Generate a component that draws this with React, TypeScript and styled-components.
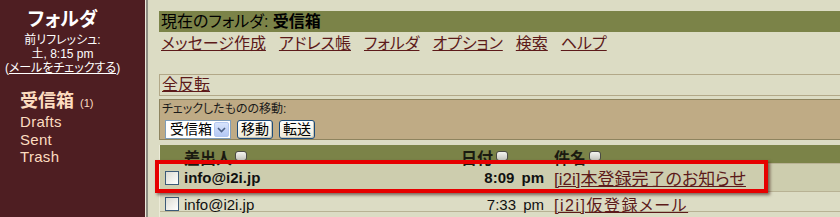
import React from "react";
import styled, { createGlobalStyle } from "styled-components";

const GlobalStyle = createGlobalStyle`
  html, body {
    margin: 0;
    padding: 0;
    overflow: hidden;
  }
  body {
    font-family: "Liberation Sans", "Noto Sans CJK JP", sans-serif;
    font-feature-settings: "palt";
  }
`;

const Page = styled.div`
  display: flex;
  width: 840px;
  height: 217px;
  overflow: hidden;
  position: relative;
  background: #dcdcc4;
`;

const Sidebar = styled.div`
  width: 145px;
  flex-shrink: 0;
  background: #4e1e22;
  color: #ffffff;
  padding-top: 8px;
  box-sizing: border-box;
`;

const SideTitle = styled.div`
  text-align: center;
  font-size: 19px;
  font-weight: bold;
  line-height: 23px;
  padding-right: 20px;
`;

const SideInfo = styled.div`
  text-align: center;
  font-size: 12px;
  line-height: 14px;
  padding-right: 20px;
  margin-top: 2px;

  a {
    color: #ffffff;
    text-decoration: underline;
  }
`;

const FolderList = styled.ul`
  list-style: none;
  margin: 17px 0 0;
  padding: 0 0 0 20px;
  color: #fcdcc0;
`;

const FolderItem = styled.li<{ $current?: boolean }>`
  font-size: ${({ $current }) => ($current ? "18px" : "15px")};
  font-weight: ${({ $current }) => ($current ? "bold" : "normal")};
  line-height: ${({ $current }) => ($current ? "19px" : "17.5px")};
  letter-spacing: ${({ $current }) => ($current ? "0" : "0.3px")};

  small {
    font-size: 11px;
    font-weight: normal;
    margin-left: 6px;
  }
`;

const Splitter = styled.div`
  width: 1px;
  flex-shrink: 0;
  background: #ece8da;
  border-right: 2px solid #8c8c82;
`;

const Main = styled.div`
  flex: 1;
  padding: 11px 0 0 11px;
  display: flex;
  flex-direction: column;
  min-width: 0;
`;

const FolderBar = styled.div`
  height: 21px;
  background: #7b8348;
  color: #000;
  font-size: 16px;
  line-height: 21px;
  padding-left: 2px;

  b {
    font-weight: bold;
  }
`;

const Nav = styled.nav`
  display: flex;
  gap: 13px;
  padding: 2px 0 0 2px;
  height: 21px;
  line-height: 20px;
`;

const Link = styled.a<{ $size?: number; $spacing?: number }>`
  color: #5c1a1a;
  text-decoration: underline;
  font-size: ${({ $size }) => $size ?? 16}px;
  letter-spacing: ${({ $spacing }) => $spacing ?? 0}px;
  cursor: pointer;
`;

const ToggleBox = styled.div`
  margin-top: 20px;
  height: 20px;
  border: 1px solid #b2a888;
  border-right: none;
  padding-left: 2px;
  line-height: 20px;
`;

const MovePanel = styled.div`
  margin-top: 3px;
  background: #bfab85;
  border: 1px solid #8e845f;
  border-right: none;
  padding: 2px 0 0 2px;
  box-sizing: border-box;
  height: 42px;
`;

const PanelLabel = styled.div`
  font-size: 12px;
  line-height: 14px;
  color: #1a1a1a;
`;

const Controls = styled.div`
  display: flex;
  align-items: center;
  gap: 6px;
  margin: 4px 0 0 3px;
`;

const SelectBox = styled.div`
  display: flex;
  align-items: center;
  justify-content: space-between;
  width: 60px;
  height: 17px;
  background: #fff;
  border: 1px solid #7f9db9;
  font-size: 14px;
  line-height: 17px;
  padding-left: 4px;
`;

const SelectArrow = styled.span`
  width: 15px;
  height: 15px;
  margin-right: 1px;
  background: linear-gradient(#d8e4fc, #b4c8f4);
  border: 1px solid #b4c8f0;
  border-radius: 2px;
  box-sizing: border-box;
  display: flex;
  align-items: center;
  justify-content: center;
`;

const Button = styled.button`
  height: 19px;
  padding: 0 3px;
  font-family: inherit;
  font-size: 14px;
  line-height: 15px;
  color: #000;
  background: linear-gradient(#ffffff, #ece9d8);
  border: 1px solid #1c4b7a;
  border-radius: 3px;
  box-shadow: inset -1px -1px 0 #c8c4b4;
`;

const Table = styled.div`
  margin-top: 5px;
  border-left: 1px solid #ecebd8;
`;

const Row = styled.div<{ $bg: string; $h: number }>`
  display: grid;
  grid-template-columns: 22px 277px 93px 1fr;
  align-items: center;
  height: ${({ $h }) => $h}px;
  background: ${({ $bg }) => $bg};
  border-bottom: 1px solid #b8b294;
`;

const HeadCell = styled.div`
  font-size: 16px;
  font-weight: bold;
  color: #1a1a10;
  display: flex;
  align-items: center;
  gap: 3px;
  padding-left: 2px;
`;

const SortIcon = styled.span`
  width: 10px;
  height: 8px;
  margin-bottom: 3px;
  border: 1px solid #4a4a44;
  border-radius: 3px;
  background: linear-gradient(#f4f4f0, #c4c4bc);
`;

const Check = styled.span`
  width: 12px;
  height: 12px;
  margin-left: 5px;
  border: 1px solid #3c5a78;
  background: linear-gradient(135deg, #dcdcd4, #ffffff);
`;

const Cell = styled.div<{ $bold?: boolean; $right?: boolean }>`
  font-size: 15px;
  font-weight: ${({ $bold }) => ($bold ? "bold" : "normal")};
  color: #111;
  text-align: ${({ $right }) => ($right ? "right" : "left")};
  padding: ${({ $right }) => ($right ? "0 8px 0 0" : "0 0 0 2px")};
  white-space: nowrap;
  word-spacing: ${({ $right }) => ($right ? "3px" : "0")};
`;

const Highlight = styled.div`
  position: absolute;
  left: 155px;
  top: 160px;
  width: 605px;
  height: 25px;
  border: 4px solid #e60000;
  box-shadow: 2px 2px 3px rgba(40, 0, 0, 0.55);
  pointer-events: none;
`;

const navItems = ["メッセージ作成", "アドレス帳", "フォルダ", "オプション", "検索", "ヘルプ"];

const folders = ["Drafts", "Sent", "Trash"];

const App: React.FC = () => {
  return (
    <>
      <GlobalStyle />
      <Page>
        <Sidebar>
          <SideTitle>フォルダ</SideTitle>
          <SideInfo>
            前リフレッシュ:
            <br />
            土, 8:15 pm
            <br />
            (<a>メールをチェックする</a>)
          </SideInfo>
          <FolderList>
            <FolderItem $current>
              受信箱<small>(1)</small>
            </FolderItem>
            {folders.map((name) => (
              <FolderItem key={name}>{name}</FolderItem>
            ))}
          </FolderList>
        </Sidebar>
        <Splitter />
        <Main>
          <FolderBar>
            現在のフォルダ: <b>受信箱</b>
          </FolderBar>
          <Nav>
            {navItems.map((item) => (
              <Link key={item}>{item}</Link>
            ))}
          </Nav>
          <ToggleBox>
            <Link>全反転</Link>
          </ToggleBox>
          <MovePanel>
            <PanelLabel>チェックしたものの移動:</PanelLabel>
            <Controls>
              <SelectBox>
                受信箱
                <SelectArrow>
                  <svg width="9" height="6" viewBox="0 0 9 6">
                    <path d="M1 1 L4.5 4.5 L8 1" fill="none" stroke="#4d6185" strokeWidth="1.6" />
                  </svg>
                </SelectArrow>
              </SelectBox>
              <Button>移動</Button>
              <Button>転送</Button>
            </Controls>
          </MovePanel>
          <Table>
            <Row $bg="#7b8348" $h={18}>
              <div />
              <HeadCell>
                差出人 <SortIcon />
              </HeadCell>
              <HeadCell>
                日付 <SortIcon />
              </HeadCell>
              <HeadCell>
                件名 <SortIcon />
              </HeadCell>
            </Row>
            <Row $bg="#cdcdae" $h={27}>
              <Check />
              <Cell $bold>info@i2i.jp</Cell>
              <Cell $bold $right>
                8:09 pm
              </Cell>
              <Cell>
                <Link $size={17}>[i2i]本登録完了のお知らせ</Link>
              </Cell>
            </Row>
            <Row $bg="#dcdcc4" $h={19}>
              <Check />
              <Cell>info@i2i.jp</Cell>
              <Cell $right>7:33 pm</Cell>
              <Cell>
                <Link $size={16} $spacing={1.5}>
                  [i2i]仮登録メール
                </Link>
              </Cell>
            </Row>
            <Row $bg="#dcdcc4" $h={20} />
          </Table>
        </Main>
        <Highlight />
      </Page>
    </>
  );
};

export default App;
